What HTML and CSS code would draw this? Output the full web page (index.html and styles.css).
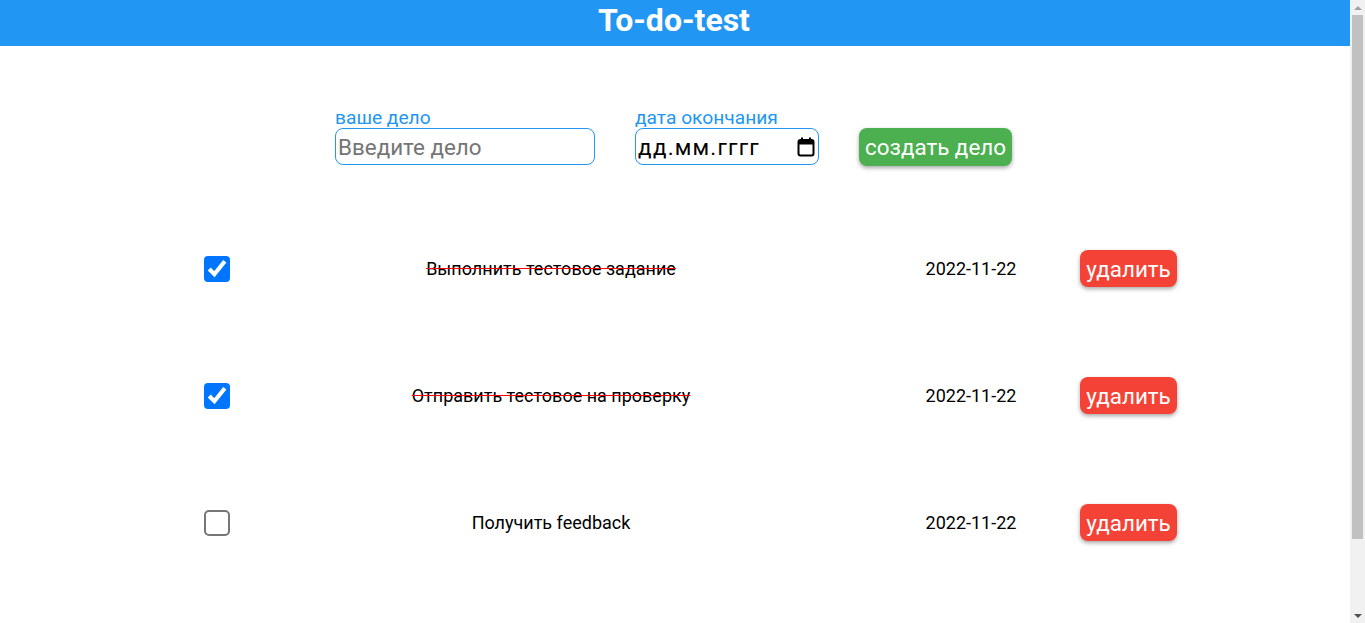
FILE: index.html
```html
<!DOCTYPE html>
<html lang="ru">
<head>
<meta charset="utf-8">
<title>To-do-test</title>
<link rel="stylesheet" href="styles.css">
</head>
<body>
<div class="app">
<header class="topbar"><h1 class="title">To-do-test</h1></header>
<main class="page">
  <form class="create-form">
    <label class="field">
      <span class="field-label">ваше дело</span>
      <input class="text-input" type="text" placeholder="Введите дело">
    </label>
    <label class="field">
      <span class="field-label">дата окончания</span>
      <span class="date-input">
        <input class="date-text" type="text" placeholder="дд.мм.гггг">
        <svg class="cal-icon" width="18" height="20" viewBox="0 0 18 20"><rect x="1.5" y="3" width="15" height="15.5" rx="2" fill="none" stroke="#000" stroke-width="2"/><rect x="1.5" y="3" width="15" height="4.5" fill="#000"/><rect x="4" y="0.5" width="2" height="4" fill="#000"/><rect x="12" y="0.5" width="2" height="4" fill="#000"/></svg>
      </span>
    </label>
    <button class="btn btn-create" type="button">создать дело</button>
  </form>
  <ul class="todo-list">
    <li class="todo">
      <span class="cell-check"><input class="check" type="checkbox" checked></span>
      <span class="todo-text done">Выполнить тестовое задание</span>
      <span class="todo-date">2022-11-22</span>
      <span class="cell-btn"><button class="btn btn-delete" type="button">удалить</button></span>
    </li>
    <li class="todo">
      <span class="cell-check"><input class="check" type="checkbox" checked></span>
      <span class="todo-text done">Отправить тестовое на проверку</span>
      <span class="todo-date">2022-11-22</span>
      <span class="cell-btn"><button class="btn btn-delete" type="button">удалить</button></span>
    </li>
    <li class="todo">
      <span class="cell-check"><input class="check" type="checkbox"></span>
      <span class="todo-text">Получить feedback</span>
      <span class="todo-date">2022-11-22</span>
      <span class="cell-btn"><button class="btn btn-delete" type="button">удалить</button></span>
    </li>
  </ul>
</main>
</div>
<div class="scrollbar" aria-hidden="true">
  <span class="sb-arrow sb-up"></span>
  <span class="sb-track"><span class="sb-thumb"></span></span>
  <span class="sb-arrow sb-down"></span>
</div>
</body>
</html>
```

FILE: styles.css
```css
html, body {
  margin: 0;
  padding: 0;
}
body {
  font-family: Roboto, "Liberation Sans", sans-serif;
  color: #000;
  background: #fff;
}
.app {
  margin-right: 15px;
}
.topbar {
  background: #2196f3;
  height: 46px;
  display: flex;
  align-items: center;
  justify-content: center;
  padding-right: 2px;
}
.title {
  margin: 0;
  color: #fff;
  font-size: 32px;
  font-weight: 700;
  line-height: 46px;
  position: relative;
  top: -3px;
}
.page {
  padding-top: 61px;
}
.create-form {
  display: flex;
  justify-content: center;
  align-items: flex-end;
  gap: 40px;
  margin: 0 0 40px 0;
  padding-right: 3px;
}
.field {
  display: flex;
  flex-direction: column;
}
.field-label {
  color: #2196f3;
  font-size: 19.2px;
  line-height: 21px;
}
.text-input {
  box-sizing: border-box;
  width: 260px;
  height: 37px;
  margin: 0;
  border: 1px solid #2196f3;
  border-radius: 8px;
  padding: 0 2px;
  font-family: Roboto, "Liberation Sans", sans-serif;
  font-size: 22.4px;
  color: #000;
  outline: none;
}
.text-input::placeholder {
  color: #757575;
}
.date-input {
  box-sizing: border-box;
  width: 184px;
  height: 37px;
  border: 1px solid #2196f3;
  border-radius: 8px;
  display: flex;
  align-items: center;
  padding: 0 3px 0 2px;
}
.date-text {
  flex: 1;
  min-width: 0;
  border: none;
  outline: none;
  padding: 0;
  font-family: Roboto, "Liberation Sans", sans-serif;
  font-size: 22.4px;
  letter-spacing: 1.2px;
  background: transparent;
}
.date-text::placeholder {
  color: #000;
}
.cal-icon {
  display: block;
  flex: none;
}
.btn {
  border: none;
  border-radius: 8px;
  color: #fff;
  font-family: Roboto, "Liberation Sans", sans-serif;
  font-size: 22.4px;
  height: 38px;
  padding: 0 6px;
  box-shadow: 0 2px 4px rgba(0, 0, 0, 0.35);
  cursor: pointer;
}
.btn-create {
  background: #4caf50;
  width: 153px;
  margin-bottom: -1px;
}
.btn-delete {
  background: #f44336;
  width: 97px;
  height: 37px;
}
.todo-list {
  list-style: none;
  margin: 0;
  padding: 0 0 118px 190px;
}
.todo {
  display: grid;
  grid-template-columns: 54px 614px 226px auto;
  align-items: center;
  height: 127px;
  font-size: 18px;
}
.cell-check {
  display: flex;
  justify-content: center;
}
.check {
  zoom: 2;
  margin: 0;
}
.todo-text {
  text-align: center;
}
.todo-text.done {
  text-decoration: line-through;
  text-decoration-color: #ff0000;
}
.todo-date {
  text-align: center;
}
.cell-btn {
  display: flex;
  margin-left: -4px;
}
.scrollbar {
  position: fixed;
  top: 0;
  right: 0;
  width: 15px;
  height: 100%;
  background: #f1f1f1;
  display: flex;
  flex-direction: column;
}
.sb-arrow {
  height: 15px;
  flex: none;
  display: flex;
  align-items: center;
  justify-content: center;
}
.sb-up::before {
  content: "";
  border-left: 4px solid transparent;
  border-right: 4px solid transparent;
  border-bottom: 4px solid #a3a3a3;
}
.sb-down::before {
  content: "";
  border-left: 4px solid transparent;
  border-right: 4px solid transparent;
  border-top: 4px solid #505050;
}
.sb-track {
  flex: 1;
  padding: 0 2px;
}
.sb-thumb {
  display: block;
  height: 524px;
  background: #c1c1c1;
}
```
